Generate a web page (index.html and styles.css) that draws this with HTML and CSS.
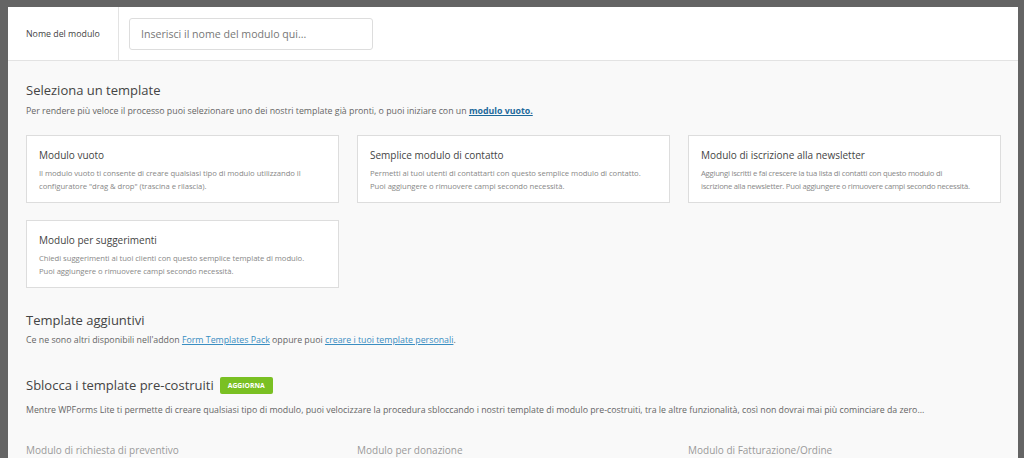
FILE: index.html
```html
<!DOCTYPE html>
<html lang="it">
<head>
  <meta charset="UTF-8" />
  <meta name="viewport" content="width=device-width, initial-scale=1.0"/>
  <title>WPForms – Nuovo modulo</title>
  <link rel="stylesheet" href="styles.css">
</head>
<body>

  <div class="builder">
    <header class="name-bar">
      <label class="name-label" for="formName">Nome del modulo</label>
      <div class="name-field">
        <input type="text" id="formName" placeholder="Inserisci il nome del modulo qui..." />
      </div>
    </header>

    <div class="setup">
      <h2>Seleziona un template</h2>
      <p class="lead">Per rendere più veloce il processo puoi selezionare uno dei nostri template già pronti, o puoi iniziare con un <a href="#" class="strong-link">modulo vuoto.</a></p>

      <div class="templates">
        <div class="template">
          <h3>Modulo vuoto</h3>
          <p>Il modulo vuoto ti consente di creare qualsiasi tipo di modulo utilizzando il<br>configuratore "drag &amp; drop" (trascina e rilascia).</p>
        </div>
        <div class="template">
          <h3>Semplice modulo di contatto</h3>
          <p>Permetti ai tuoi utenti di contattarti con questo semplice modulo di contatto.<br>Puoi aggiungere o rimuovere campi secondo necessità.</p>
        </div>
        <div class="template">
          <h3>Modulo di iscrizione alla newsletter</h3>
          <p>Aggiungi iscritti e fai crescere la tua lista di contatti con questo modulo di<br>iscrizione alla newsletter. Puoi aggiungere o rimuovere campi secondo necessità.</p>
        </div>
        <div class="template">
          <h3>Modulo per suggerimenti</h3>
          <p>Chiedi suggerimenti ai tuoi clienti con questo semplice template di modulo.<br>Puoi aggiungere o rimuovere campi secondo necessità.</p>
        </div>
      </div>

      <h2 class="section-title">Template aggiuntivi</h2>
      <p class="lead">Ce ne sono altri disponibili nell'addon <a href="#">Form Templates Pack</a> oppure puoi <a href="#">creare i tuoi template personali</a>.</p>

      <h2 class="section-title unlock">Sblocca i template pre-costruiti <span class="upgrade">Aggiorna</span></h2>
      <p class="lead">Mentre WPForms Lite ti permette di creare qualsiasi tipo di modulo, puoi velocizzare la procedura sbloccando i nostri template di modulo pre-costruiti, tra le altre funzionalità, così non dovrai mai più cominciare da zero...</p>

      <div class="templates locked">
        <div class="template">
          <h3>Modulo di richiesta di preventivo</h3>
        </div>
        <div class="template">
          <h3>Modulo per donazione</h3>
        </div>
        <div class="template">
          <h3>Modulo di Fatturazione/Ordine</h3>
        </div>
      </div>
    </div>
  </div>

</body>
</html>
```

FILE: styles.css
```css
html {
  overflow: hidden;
}

body {
  font-family: "Open Sans", Arial, sans-serif;
  background: #646464;
  margin: 0;
  padding: 7px 6px 0 8px;
  height: 458px;
  box-sizing: border-box;
  overflow: hidden;
}

.builder {
  background: #f9f9f9;
  height: 100%;
}

.name-bar {
  display: flex;
  align-items: stretch;
  height: 53px;
  background: #fff;
  border-bottom: 1px solid #e3e3e3;
}

.name-label {
  width: 92px;
  padding-left: 18px;
  border-right: 1px solid #e3e3e3;
  display: flex;
  align-items: center;
  font-size: 8.8px;
  color: #444;
}

.name-field {
  display: flex;
  align-items: center;
  padding-left: 10px;
}

.name-field input {
  width: 244px;
  height: 32px;
  box-sizing: border-box;
  border: 1px solid #ddd;
  border-radius: 3px;
  padding: 0 11px;
  font-family: inherit;
  font-size: 10.6px;
  color: #444;
}

.name-field input::placeholder {
  color: #777;
}

.setup {
  padding: 20px 17px 0 18px;
}

h2 {
  font-size: 13px;
  font-weight: 400;
  color: #444;
  margin: 0 0 5px;
  line-height: 18px;
}

.lead {
  font-size: 8.8px;
  color: #666;
  margin: 0;
  line-height: 14px;
}

a {
  color: #3a8ec2;
}

.strong-link {
  color: #1e6a9c;
  font-weight: bold;
}

.templates {
  display: grid;
  grid-template-columns: repeat(3, 1fr);
  gap: 17px 18px;
  margin-top: 17px;
}

.template {
  background: #fff;
  border: 1px solid #ddd;
  height: 68px;
  box-sizing: border-box;
  padding: 12px 8px 0 12px;
  overflow: hidden;
}

.template h3 {
  font-size: 10px;
  font-weight: 400;
  color: #444;
  margin: 0 0 5px;
  line-height: 14px;
}

.template p {
  font-size: 7.7px;
  color: #888;
  margin: 0;
  line-height: 13px;
  white-space: nowrap;
  letter-spacing: -0.05px;
}

.template:nth-child(3) p {
  letter-spacing: -0.25px;
}

.section-title {
  margin-top: 23px;
  margin-bottom: 4px;
}

.unlock {
  margin-top: 29px;
  margin-bottom: 9px;
  display: flex;
  align-items: center;
  gap: 6px;
}

.upgrade {
  background: #7ac023;
  color: #fff;
  font-size: 6.8px;
  font-weight: bold;
  text-transform: uppercase;
  padding: 0 8px;
  line-height: 17px;
  border-radius: 2px;
}

.locked {
  margin-top: 26px;
}

.locked .template {
  background: none;
  border: none;
  padding: 0;
}

.locked .template h3 {
  color: #999;
}
```
